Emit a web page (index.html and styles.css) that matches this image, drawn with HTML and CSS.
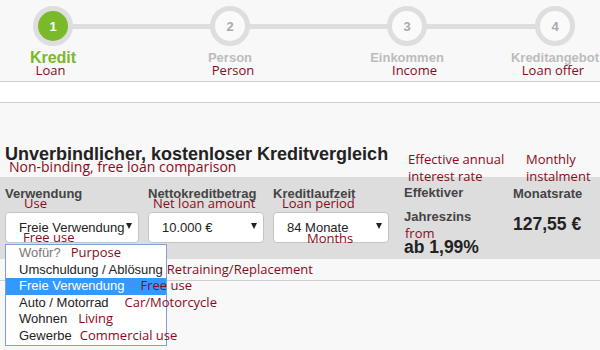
FILE: index.html
```html
<!DOCTYPE html>
<html lang="de">
<head>
<meta charset="utf-8">
<title>Kreditvergleich</title>
<link rel="stylesheet" href="styles.css">
</head>
<body>
<header class="stepper">
  <ol class="steps">
    <li class="step is-active">
      <span class="dot">1</span>
      <span class="name">Kredit</span>
      <span class="tr tr-step tr-loan">Loan</span>
    </li>
    <li class="step">
      <span class="dot">2</span>
      <span class="name">Person</span>
      <span class="tr tr-step tr-person">Person</span>
    </li>
    <li class="step">
      <span class="dot">3</span>
      <span class="name">Einkommen</span>
      <span class="tr tr-step tr-income">Income</span>
    </li>
    <li class="step step-last">
      <span class="dot">4</span>
      <span class="name">Kreditangebot</span>
      <span class="tr tr-step tr-offer">Loan offer</span>
    </li>
  </ol>
</header>
<div class="strip"></div>
<main class="calc">
  <div class="intro">
    <h1 class="title">Unverbindlicher, kostenloser Kreditvergleich</h1>
    <p class="tr tr-intro">Non-binding, free loan comparison</p>
  </div>
  <section class="band">
    <div class="field field-use">
      <span class="lbl">Verwendung</span>
      <span class="tr tr-sub tr-use">Use</span>
      <div class="select"><span class="value">Freie Verwendung</span><i class="caret"></i></div>
      <span class="tr tr-below tr-free">Free use</span>
      <ul class="dropdown">
        <li class="opt opt-placeholder">Wofür?<span class="tr tr-opt tr-purpose">Purpose</span></li>
        <li class="opt">Umschuldung / Ablösung<span class="tr tr-opt tr-retrain">Retraining/Replacement</span></li>
        <li class="opt is-selected">Freie Verwendung<span class="tr tr-opt tr-freeuse">Free use</span></li>
        <li class="opt">Auto / Motorrad<span class="tr tr-opt tr-car">Car/Motorcycle</span></li>
        <li class="opt">Wohnen<span class="tr tr-opt tr-living">Living</span></li>
        <li class="opt">Gewerbe<span class="tr tr-opt tr-commercial">Commercial use</span></li>
      </ul>
    </div>
    <div class="field">
      <span class="lbl">Nettokreditbetrag</span>
      <span class="tr tr-sub tr-net">Net loan amount</span>
      <div class="select"><span class="value">10.000 €</span><i class="caret"></i></div>
    </div>
    <div class="field">
      <span class="lbl">Kreditlaufzeit</span>
      <span class="tr tr-sub tr-period">Loan period</span>
      <div class="select"><span class="value">84 Monate</span><i class="caret"></i></div>
      <span class="tr tr-below tr-months">Months</span>
    </div>
    <div class="field result">
      <span class="tr tr-head">Effective annual interest rate</span>
      <span class="lbl lbl-rate">Effektiver Jahreszins</span>
      <span class="tr tr-from">from</span>
      <span class="big big-rate">ab 1,99%</span>
    </div>
    <div class="field result">
      <span class="tr tr-head tr-monthly">Monthly instalment</span>
      <span class="lbl">Monatsrate</span>
      <span class="big big-month">127,55 €</span>
    </div>
  </section>
  <div class="after"></div>
</main>
</body>
</html>
```
FILE: styles.css
```css
* { box-sizing: border-box; }
html, body { margin: 0; padding: 0; }
body {
  background: #f8f8f8;
  font-family: "Liberation Sans", Arial, sans-serif;
  color: #222;
  width: 600px;
  height: 350px;
  overflow: hidden;
}

/* translation annotations */
.tr {
  font-family: "Open Sans", "DejaVu Sans", sans-serif;
  font-size: 13px;
  font-weight: 400;
  color: #8b0a1a;
  white-space: nowrap;
}

/* ---------- stepper ---------- */
.stepper {
  height: 82px;
  border-bottom: 1px solid #cfcfcf;
  background: #f8f8f8;
}
.steps {
  position: relative;
  list-style: none;
  margin: 0;
  padding: 6px 0 0 8px;
  display: flex;
  gap: 87px;
}
.steps::before {
  content: "";
  position: absolute;
  left: 53px;
  width: 502px;
  top: 24px;
  height: 5px;
  background: #dedede;
}
.step {
  position: relative;
  width: 90px;
  display: flex;
  flex-direction: column;
  align-items: center;
}
.step-last { margin-left: -29px; }
.dot {
  position: relative;
  width: 40px;
  height: 40px;
  border-radius: 50%;
  border: 5px solid #dedede;
  background: #fafafa;
  color: #aaa;
  font-size: 13px;
  font-weight: 700;
  display: flex;
  align-items: center;
  justify-content: center;
}
.is-active .dot {
  background: #7ab929;
  color: #fff;
}
.name {
  margin-top: 3px;
  line-height: 18px;
  font-size: 13px;
  font-weight: 700;
  color: #bcbcbc;
  white-space: nowrap;
}
.is-active .name {
  font-size: 16px;
  color: #7ab929;
}
.tr-step {
  display: block;
  line-height: 12px;
  margin-top: -3px;
}
.tr-loan { padding-right: 5px; }
.tr-person { padding-left: 6px; }
.tr-income { padding-left: 15px; }
.tr-offer { padding-right: 4px; }

/* ---------- white strip ---------- */
.strip {
  height: 21px;
  background: #fff;
  border-bottom: 1px solid #cfcfcf;
}

/* ---------- calculator ---------- */
.intro { padding: 41px 0 0 5px; }
.title {
  margin: 0;
  font-size: 18px;
  line-height: 20px;
  font-weight: 700;
  color: #222;
}
.tr-intro {
  margin: -4px 0 3px 4px;
  font-size: 14px;
  line-height: 14px;
}

.band {
  height: 82px;
  background: #dddddd;
  padding: 9px 0 0 5px;
  display: grid;
  grid-template-columns: 143px 125px 131px 109px 1fr;
  align-items: start;
}
.field {
  position: relative;
  display: flex;
  flex-direction: column;
  align-items: flex-start;
}
.lbl {
  display: block;
  font-size: 13px;
  line-height: 15px;
  font-weight: 700;
  color: #444;
  white-space: nowrap;
}
.tr-sub {
  display: block;
  line-height: 12px;
  margin-top: -4px;
}
.tr-use { margin-left: 19px; }
.tr-net { margin-left: 5px; }
.tr-period { margin-left: 9px; }

.select {
  margin-top: 3px;
  width: 116px;
  height: 31px;
  background: #fff;
  border: 1px solid #c4c4c4;
  border-radius: 4px;
  display: flex;
  align-items: center;
  justify-content: space-between;
  padding: 0 6px 0 13px;
  font-size: 13px;
  color: #222;
}
.field-use .select { width: 134px; }
.caret {
  width: 0;
  height: 0;
  border-left: 3px solid transparent;
  border-right: 3px solid transparent;
  border-top: 6px solid #222;
  margin-bottom: 3px;
}
.tr-below {
  display: block;
  line-height: 12px;
  margin-top: -12px;
}
.tr-free { margin-left: 18px; }
.tr-months { margin-left: 34px; margin-top: -11px; }

/* dropdown menu */
.dropdown {
  position: absolute;
  left: 0;
  top: 58px;
  width: 162px;
  margin: 0;
  padding: 0;
  list-style: none;
  background: #fff;
  border: 1px solid #7f9fd6;
  z-index: 5;
}
.opt {
  height: 16.6px;
  line-height: 16.6px;
  padding-left: 13px;
  font-size: 13px;
  color: #222;
  white-space: nowrap;
}
.opt-placeholder { color: #777; line-height: 15px; }
.opt.is-selected { background: #3399ff; color: #fff; }
.tr-opt { line-height: 1; }
.tr-purpose { margin-left: 10px; }
.tr-retrain { margin-left: 4px; }
.tr-freeuse { margin-left: 16px; }
.tr-car { margin-left: 16px; }
.tr-living { margin-left: 11px; }
.tr-commercial { margin-left: 8px; }

/* result columns */
.tr-head {
  position: absolute;
  left: 4px;
  top: -35px;
  width: 104px;
  white-space: normal;
  line-height: 17px;
}
.tr-monthly { left: 13px; width: 90px; }
.lbl-rate {
  width: 100px;
  white-space: normal;
  line-height: 24px;
  margin-top: -5px;
}
.tr-from {
  display: block;
  line-height: 12px;
  margin: -2px 0 0 1px;
}
.big {
  display: block;
  font-size: 17.5px;
  line-height: 18px;
  font-weight: 700;
  color: #222;
  white-space: nowrap;
}
.big-rate { margin-top: -1.5px; }
.big-month { margin-top: 13.5px; }

.after {
  height: 22px;
  border-bottom: 1px solid #cfcfcf;
}
```
